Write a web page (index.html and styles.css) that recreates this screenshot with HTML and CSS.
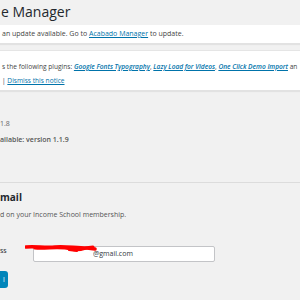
FILE: index.html
```html
<!DOCTYPE html>
<html lang="en">
<head>
    <meta charset="UTF-8">
    <title>Acabado Manager</title>
    <link rel="stylesheet" href="styles.css">
</head>
<body>
    <div class="wrap">
        <h1 class="page-title">e Manager</h1>

        <div class="notice notice-one">
            <p>an update available. Go to <a href="#">Acabado Manager</a> to update.</p>
        </div>

        <div class="notice notice-two">
            <p>s the following plugins: <a class="plugin" href="#">Google Fonts Typography</a>, <a class="plugin" href="#">Lazy Load for Videos</a>, <a class="plugin" href="#">One Click Demo Import</a> an</p>
            <p>| <a href="#">Dismiss this notice</a></p>
        </div>

        <div class="versions">
            <p>1.8</p>
            <p class="latest">ailable: version 1.1.9</p>
        </div>

        <hr class="divider">

        <h2 class="section-title">mail</h2>
        <p class="section-desc">d on your Income School membership.</p>

        <div class="field-row">
            <label class="field-label" for="email">ss</label>
            <div class="input-wrap">
                <input id="email" class="field-input" type="text" value="@gmail.com">
                <!-- scribbled-out part of the address -->
                <svg class="scribble" width="72" height="12" viewBox="0 0 72 12">
                    <path d="M1 5 C 10 4, 20 6, 30 5 S 50 6, 62 6 L 70 7" stroke="#ff0000" stroke-width="3.5" fill="none" stroke-linecap="round"/>
                    <path d="M10 6 C 22 7, 34 4, 46 7 S 58 5, 68 5" stroke="#ff0000" stroke-width="3" fill="none" stroke-linecap="round"/>
                    <path d="M44 8 L 52 9" stroke="#ff0000" stroke-width="2" fill="none" stroke-linecap="round"/>
                </svg>
            </div>
        </div>

        <button class="button-primary">l</button>
    </div>
</body>
</html>
```

FILE: styles.css
```css
/* WordPress admin look */
body {
    margin: 0;
    padding: 0;
    background: #f1f1f1;
    font-family: "Open Sans", "Noto Sans", sans-serif;
    color: #444;
    overflow: hidden;
}

.wrap {
    width: 300px;
}

p {
    margin: 0;
    white-space: nowrap;
}

a {
    color: #0073aa;
}

.page-title {
    margin: 0;
    padding: 3px 0 0 1px;
    height: 21px;
    font-size: 14px;
    font-weight: 400;
    line-height: 18px;
    color: #23282d;
}

/* Notices */
.notice {
    background: #fff;
    box-shadow: 0 1px 1px rgba(0, 0, 0, 0.06);
    border-bottom: 1px solid #e2e2e2;
    font-size: 7px;
    overflow: hidden;
}

.notice p {
    padding-left: 2px;
    line-height: 14px;
}

.notice-one {
    margin-top: 1px;
    padding: 2px 0;
}

.notice-two {
    margin-top: 6px;
    border-top: 1px solid #e5e5e5;
    padding: 9px 0 2px;
    font-size: 6.6px;
}

.notice-two .plugin {
    font-style: italic;
    font-weight: 600;
}

/* Version info */
.versions {
    margin-top: 25px;
    font-size: 7px;
    line-height: 16px;
    color: #666;
}

.versions .latest {
    font-weight: 600;
    color: #555;
}

.divider {
    margin: 34px 0 0;
    border: 0;
    border-top: 1px solid #dcdcdc;
    height: 0;
}

.section-title {
    margin: 7px 0 0;
    font-size: 10px;
    font-weight: 700;
    line-height: 14px;
    color: #23282d;
}

.section-desc {
    margin-top: 4px;
    font-size: 7px;
    line-height: 14px;
    color: #555;
}

/* Email field */
.field-row {
    display: flex;
    align-items: center;
    margin-top: 17px;
}

.field-label {
    width: 33px;
    font-size: 7px;
    color: #23282d;
}

.input-wrap {
    position: relative;
}

.field-input {
    box-sizing: border-box;
    width: 182px;
    height: 16px;
    margin: 0;
    padding: 0 0 0 59px;
    border: 1px solid #c3c4c7;
    border-radius: 2px;
    background: #fff;
    font-family: "Open Sans", "Noto Sans", sans-serif;
    font-size: 7px;
    color: #32373c;
}

.scribble {
    position: absolute;
    left: -8px;
    top: 3px;
}

.button-primary {
    display: block;
    margin-top: 9px;
    width: 8px;
    height: 17px;
    padding: 0 0 0 3px;
    border: 0;
    border-radius: 0 3px 3px 0;
    background: #0085ba;
    color: #fff;
    font-family: "Open Sans", "Noto Sans", sans-serif;
    font-size: 7px;
    text-align: left;
}
```
